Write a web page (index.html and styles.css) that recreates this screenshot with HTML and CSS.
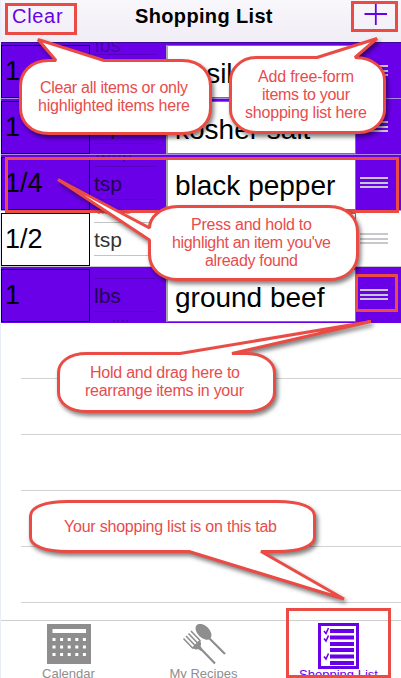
FILE: index.html
```html
<!DOCTYPE html>
<html lang="en">
<head>
<meta charset="utf-8">
<title>Shopping List</title>
<link rel="stylesheet" href="styles.css">
</head>
<body>
<div class="app">
  <header class="nav">
    <span class="clear">Clear</span>
    <h1>Shopping List</h1>
    <svg class="plus" width="24" height="22" viewBox="0 0 24 22"><path d="M0.5 11H23M11.8 1V22"/></svg>
  </header>
  <main class="list">
    <div class="row on"><div class="qty">1</div><div class="unit first"><i class="ghost up">lbs</i><b></b></div><div class="name">basil</div><div class="grip"><i></i><i></i><i></i></div></div>
    <div class="row on"><div class="qty">1</div><div class="unit"><b>tsp</b></div><div class="name">kosher salt</div><div class="grip"><i></i><i></i><i></i></div></div>
    <div class="row on"><div class="qty">1/4</div><div class="unit"><i class="ghost up">tbsp</i><b>tsp</b></div><div class="name">black pepper</div><div class="grip"><i></i><i></i><i></i></div></div>
    <div class="row"><div class="qty">1/2</div><div class="unit"><i class="ghost up">tbsp</i><b>tsp</b></div><div class="name"></div><div class="grip"><i></i><i></i><i></i></div></div>
    <div class="row on"><div class="qty">1</div><div class="unit"><b>lbs</b><i class="ghost down">milli</i></div><div class="name">ground beef</div><div class="grip"><i></i><i></i><i></i></div></div>
    <div class="empty"></div><div class="empty"></div><div class="empty"></div><div class="empty"></div><div class="empty"></div>
  </main>
  <nav class="tabs">
    <div class="tab cal">
      <svg width="44" height="40" viewBox="0 0 44 40"><path fill="#8e8e8e" d="M0 0H44V40H0Z"/><path fill="#fff" d="M5.500 5H39V9H5.500Z"/><path stroke="#fff" stroke-width="3" stroke-dasharray="3 4.600" d="M5.500 15.500H39M5.500 23H39M5.500 30.500H39"/></svg>
      <span>Calendar</span>
    </div>
    <div class="tab rec">
      <svg width="44" height="42" viewBox="0 0 44 42"><g fill="none" stroke="#8e8e8e" stroke-width="1.600"><path d="M1.500 14.500L11 24.500M4 12L13.500 22M6.500 9.500L16 19.500M9 7L18.500 17"/><path d="M27 14L43 30M18 24L33 39.500" stroke-width="2.200"/></g><path fill="#8e8e8e" d="M10 23.500L17.500 16Q20 19 18.500 22L20.500 25.500L19 27L16 25Q13 26.500 10 23.500Z"/><ellipse cx="21.500" cy="7.800" rx="9.500" ry="6" transform="rotate(45 21.500 7.800)" fill="#8e8e8e"/></svg>
      <span>My Recipes</span>
    </div>
    <div class="tab shop">
      <svg width="41" height="46" viewBox="0 0 41 46"><path d="M1.500 1.500H39.500V44.500H1.500Z" fill="none" stroke="#6a00e8" stroke-width="3"/><path d="M12 8H36M12 14.500H36M12 21H36M12 27H36M12 33.500H36M12 40H36" stroke="#6a00e8" stroke-width="4"/><path d="M6 8L8 10.500L10.500 5M6 15.500L8 18L10.500 12.500M6 33.500L8 36L10.500 30.500" fill="none" stroke="#6a00e8" stroke-width="1.600"/></svg>
      <span>Shopping List</span>
    </div>
  </nav>
</div>
<svg class="notes" width="401" height="678" viewBox="0 0 401 678">
  <g class="frames">
    <path d="M6.500 4.500H75.500V33.500H6.500Z"/>
    <path d="M352.500 2.500H396.500V30.500H352.500Z"/>
    <path d="M6.500 158.500H397.500V211.500H6.500Z"/>
    <path d="M356.500 275.500H396.500V310.500H356.500Z"/>
    <path d="M287.500 609.500H389.500V676.500H287.500Z"/>
  </g>
  <g class="bubbles">
    <path d="M56 60.500L38 39.500L104 60.500H182C202 60.500 210.500 74 210.500 86V108C210.500 120 202 133.500 182 133.500H49C29 133.500 20.500 120 20.500 108V86C20.500 74 29 60.500 49 60.500Z"/>
    <path d="M317 57.500L377 38.500L355 57.500C375 57.500 384.500 70 384.500 80V110C384.500 120 375 132.500 359 132.500H256C240 132.500 230.500 120 230.500 110V80C230.500 70 240 57.500 256 57.500Z"/>
    <path d="M149.500 228L58 179.500L149.500 240V254C149.500 268 160 279.500 178 279.500H329C347 279.500 357.500 268 357.500 254V232C357.500 218 347 206.500 329 206.500H178C160 206.500 149.500 218 149.500 228Z"/>
    <path d="M180 353.500L371 321.500L232 353.500H246C264 353.500 274.500 362 274.500 373V392C274.500 403 264 411.500 246 411.500H87C69 411.500 58.500 403 58.500 392V373C58.500 362 69 353.500 87 353.500Z"/>
    <path d="M189 551.500L344 599L261 551.500H277C300 551.500 314.500 546 314.500 537V516C314.500 507 300 501.500 277 501.500H68C45 501.500 30.500 507 30.500 516V537C30.500 546 45 551.500 68 551.500Z"/>
  </g>
  <g class="words">
    <text x="40" y="93" textLength="148">Clear all items or only</text>
    <text x="38" y="111" textLength="152">highlighted items here</text>
    <text x="258" y="82" textLength="96">Add free-form</text>
    <text x="262" y="100" textLength="88">items to your</text>
    <text x="245" y="118" textLength="122">shopping list here</text>
    <text x="191" y="230" textLength="121">Press and hold to</text>
    <text x="172" y="248" textLength="159">highlight an item you've</text>
    <text x="205" y="266" textLength="93">already found</text>
    <text x="90" y="378" textLength="150">Hold and drag here to</text>
    <text x="85" y="396" textLength="159">rearrange items in your</text>
    <text x="64" y="532" textLength="213">Your shopping list is on this tab</text>
  </g>
</svg>
</body>
</html>
```
FILE: styles.css
```css
* { box-sizing: border-box; }
body { margin: 0; background: #fff; font-family: "Liberation Sans", Arial, sans-serif; }
.app { width: 401px; height: 678px; overflow: hidden; display: flex; flex-direction: column; border-left: 1px solid #e9edf8; }
.nav { height: 43px; flex: none; display: grid; grid-template-columns: 134px 1fr 37px; padding-top: 3px; background: linear-gradient(#f8f7fb, #f1edf6); border-bottom: 1px solid #3c0a9a; }
.clear { color: #6a00e8; font-size: 20px; line-height: 26px; padding-left: 11px; letter-spacing: 0.7px; }
h1 { margin: 0; font-size: 20px; line-height: 26px; letter-spacing: 0.35px; white-space: nowrap; }
.plus { fill: none; stroke: #6a00e8; stroke-width: 1.8; }
.list { height: 577px; flex: none; }
.row { height: 56px; display: grid; grid-template-columns: 89px 76px 190px 45px; border-bottom: 1px solid #c8c7cc; background: #fff; }
.row.on { background: #6a00e8; border-bottom-color: #a98be0; }
.row.on:nth-child(5) { border-bottom-color: #6a00e8; }
.qty { height: 53px; margin-top: 2px; border: 1px solid #000; font-size: 27px; line-height: 50px; padding-left: 3px; }
.unit { height: 55px; overflow: hidden; position: relative; font-size: 21px; padding: 11px 11px 0 4px; color: #333; }
.on .unit { color: #220052; }
.unit b { display: block; height: 34px; line-height: 34px; font-weight: normal; border-top: 1px solid #c4c4c4; border-bottom: 1px solid #c4c4c4; }
.on .unit b { border-color: #5800bf; }
.ghost { position: absolute; left: 5px; font-style: normal; font-size: 20px; line-height: 22px; opacity: .45; }
.ghost.up { top: -15px; }
.first .ghost.up { top: -9px; }
.ghost.down { top: 50px; }
.name { height: 53px; margin-top: 2px; border: 1px solid #777; border-left: 2px solid #aaa; background: #fff; font-size: 28px; line-height: 56px; padding-left: 7px; white-space: nowrap; }
.grip { display: flex; flex-direction: column; gap: 2px; padding: 22px 0 0 4px; }
.grip i { width: 28px; height: 2px; margin-bottom: 0.5px; background: #c7c7cc; }
.empty { height: 56px; margin-left: 20px; border-bottom: 1px solid #d2d2d2; }
.tabs { flex: none; height: 58px; border-top: 1px solid #cfcfcf; background: #fff; display: grid; grid-template-columns: 135px 135px 1fr; }
.tab { display: flex; flex-direction: column; align-items: center; color: #8e8e8e; font-size: 13px; line-height: 16px; white-space: nowrap; }
.tab svg { flex: none; }
.cal svg { margin: 3px 0 2px; }
.rec svg { margin: 3px 0 0; }
.rec svg, .cal svg { position: relative; }
.shop { color: #6a00e8; padding-left: 5px; }
.shop svg { margin: 2px 0 -2px; }
.notes { position: absolute; left: 0; top: 0; }
.frames { fill: none; stroke: #ea4b44; stroke-width: 3; }
.bubbles { fill: #fff; stroke: #ea4b44; stroke-width: 3; stroke-linejoin: bevel; filter: drop-shadow(2px 3px 2px rgba(0,0,0,.5)); }
.words { fill: #e84c4c; font-size: 16px; }
```
